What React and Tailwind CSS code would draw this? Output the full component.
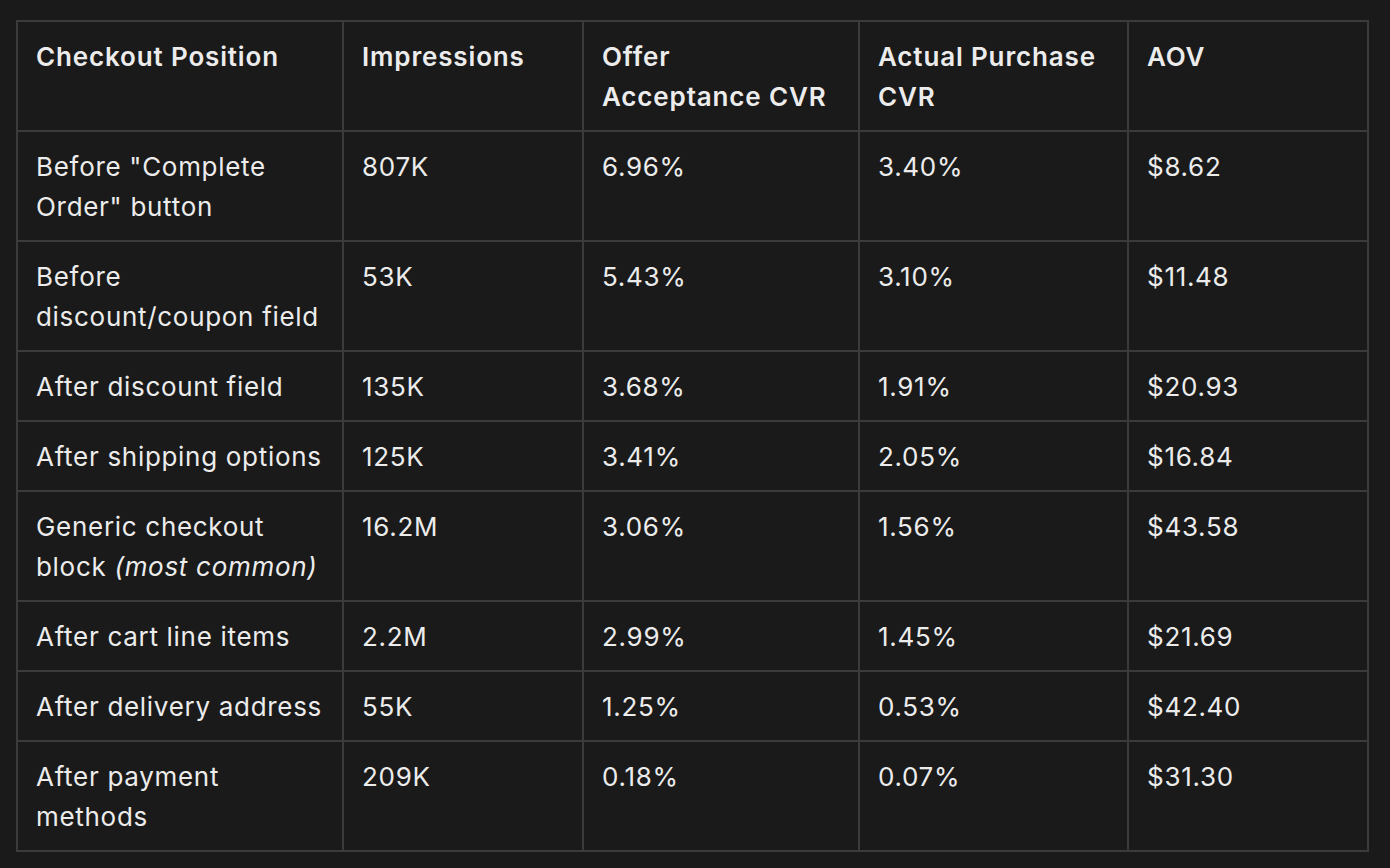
export default function App() {
  const rows = [
    [<>Before "Complete Order" button</>, "807K", "6.96%", "3.40%", "$8.62"],
    [<>Before discount/coupon field</>, "53K", "5.43%", "3.10%", "$11.48"],
    [<>After discount field</>, "135K", "3.68%", "1.91%", "$20.93"],
    [<>After shipping options</>, "125K", "3.41%", "2.05%", "$16.84"],
    [<>Generic checkout block <em>(most common)</em></>, "16.2M", "3.06%", "1.56%", "$43.58"],
    [<>After cart line items</>, "2.2M", "2.99%", "1.45%", "$21.69"],
    [<>After delivery address</>, "55K", "1.25%", "0.53%", "$42.40"],
    [<>After payment methods</>, "209K", "0.18%", "0.07%", "$31.30"],
  ];
  const headers = [
    <>Checkout Position</>,
    <>Impressions</>,
    <>Offer<br />Acceptance CVR</>,
    <>Actual Purchase<br />CVR</>,
    <>AOV</>,
  ];
  return (
    <div className="min-h-[868px] w-[1390px] bg-[#1a1a1a] pl-[16px] pt-[20px] text-[#ececec]" style={{ fontFamily: "Inter, 'Noto Sans', sans-serif" }}>
      <table className="w-[1351px] table-fixed border-collapse text-[26px] leading-[40px] tracking-[0.7px]">
        <colgroup>
          <col className="w-[326px]" />
          <col className="w-[240px]" />
          <col className="w-[276px]" />
          <col className="w-[269px]" />
          <col className="w-[240px]" />
        </colgroup>
        <thead>
          <tr>
            {headers.map((h, i) => (
              <th key={i} className="border-2 border-[#3b3b3b] px-[18px] pt-[15px] pb-[13px] text-left align-top font-semibold tracking-[0.85px]">
                {h}
              </th>
            ))}
          </tr>
        </thead>
        <tbody>
          {rows.map((r, i) => (
            <tr key={i}>
              {r.map((c, j) => (
                <td key={j} className="border-2 border-[#3b3b3b] px-[18px] pt-[15px] pb-[13px] text-left align-top font-normal">
                  {c}
                </td>
              ))}
            </tr>
          ))}
        </tbody>
      </table>
    </div>
  );
}
